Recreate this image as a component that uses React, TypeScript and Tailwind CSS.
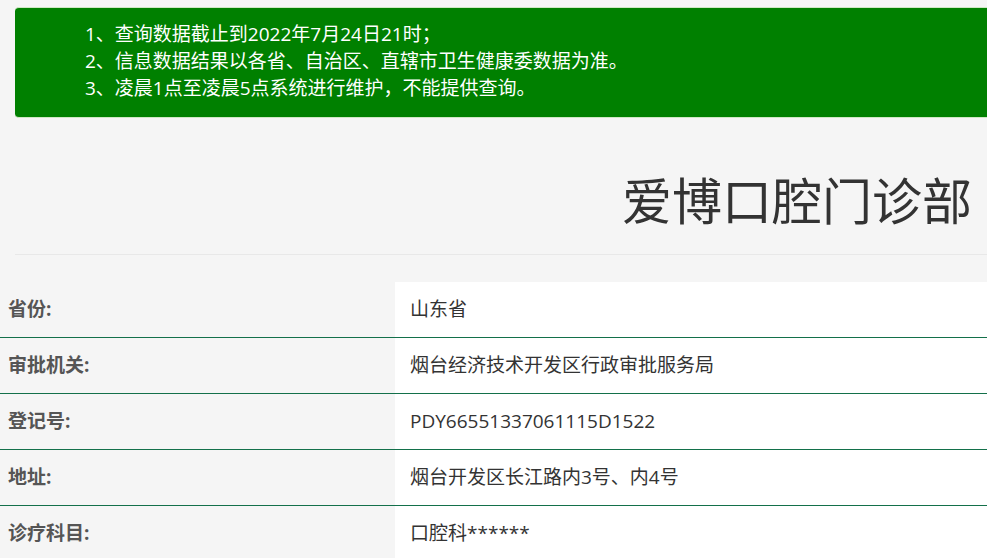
import React from "react";

const rows: [string, string][] = [
  ["省份:", "山东省"],
  ["审批机关:", "烟台经济技术开发区行政审批服务局"],
  ["登记号:", "PDY66551337061115D1522"],
  ["地址:", "烟台开发区长江路内3号、内4号"],
  ["诊疗科目:", "口腔科******"],
];

export default function App() {
  return (
    <div
      className="w-[987px] h-[558px] overflow-hidden bg-[#f5f5f5]"
      style={{ fontFamily: '"Open Sans", "Noto Sans CJK SC", sans-serif' }}
    >
      <div className="pt-[7px] pl-[15px]">
        <div className="w-[1000px] h-[111px] rounded-l-[4px] bg-[#008000] border-y border-[#cfe8c4] pl-[70px] pt-[13px] text-[19px] leading-[27px] text-white">
          <div>1、查询数据截止到2022年7月24日21时；</div>
          <div>2、信息数据结果以各省、自治区、直辖市卫生健康委数据为准。</div>
          <div>3、凌晨1点至凌晨5点系统进行维护，不能提供查询。</div>
        </div>
      </div>
      <div className="flex justify-end pr-[15px] pt-[53px] h-[136px]">
        <h1 className="text-[50px] leading-[60px] text-[#333]">爱博口腔门诊部</h1>
      </div>
      <div className="ml-[15px] border-t border-[#e8e8e8]" />
      <div className="mt-[27px]">
        {rows.map(([k, v], i) => (
          <div key={i} className="flex h-[56px] border-b border-[#13704a]">
            <div className="w-[395px] shrink-0 flex items-center pl-[8px] text-[19px] font-bold text-[#555]">
              {k}
            </div>
            <div className="flex-1 bg-white flex items-center pl-[15px] text-[19px] text-[#333]">
              {v}
            </div>
          </div>
        ))}
      </div>
    </div>
  );
}
